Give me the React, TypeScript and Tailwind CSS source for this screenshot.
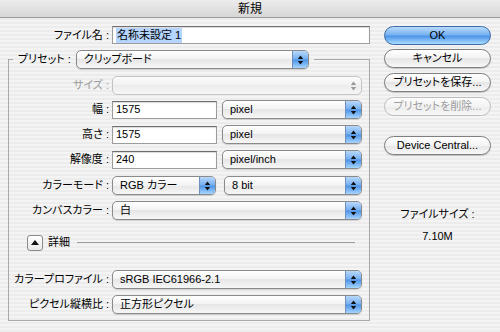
import React from "react";

const stripes =
  "bg-[repeating-linear-gradient(180deg,#ececec_0px,#ececec_2px,#f4f4f4_2px,#f4f4f4_4px)]";

function Arrows({ dim }: { dim?: boolean }): JSX.Element {
  return (
    <svg width="7" height="10" viewBox="0 0 7 10">
      <path d="M3.5 0.5 L6.2 4 L0.8 4Z M0.8 6 L6.2 6 L3.5 9.5Z" fill={dim ? "#9a9a9a" : "#111"} />
    </svg>
  );
}

function Popup({
  value,
  className,
  disabled,
}: {
  value: string;
  className: string;
  disabled?: boolean;
}): JSX.Element {
  return (
    <div
      className={
        "flex h-[19px] items-stretch overflow-hidden rounded-[5px] border " +
        (disabled
          ? "border-[#c4c4c4] bg-[linear-gradient(#fbfbfb,#f2f2f2_50%,#ececec_50%,#f6f6f6)] "
          : "border-[#8a8a8a] bg-[linear-gradient(#ffffff,#f2f2f2_50%,#e6e6e6_50%,#f7f7f7)] shadow-[0_1px_1px_rgba(0,0,0,0.15)] ") +
        className
      }
    >
      <div className="flex flex-1 items-center pl-[7px] leading-none">{value}</div>
      {disabled ? (
        <div className="flex w-[16px] items-center justify-center">
          <Arrows dim />
        </div>
      ) : (
        <div className="flex w-[16px] items-center justify-center border-l border-[#6f8fbf] bg-[linear-gradient(#b8d8fb,#74aef0_48%,#4d93e6_52%,#a6d5ff)]">
          <Arrows />
        </div>
      )}
    </div>
  );
}

function Field({ value, className }: { value: React.ReactNode; className: string }): JSX.Element {
  return (
    <div
      className={
        "flex h-[18px] items-center border border-[#9c9c9c] border-t-[#6e6e6e] bg-white pl-[3px] leading-none shadow-[inset_0_1px_1px_rgba(0,0,0,0.15)] " +
        className
      }
    >
      {value}
    </div>
  );
}

function Button({
  label,
  primary,
  disabled,
  className,
}: {
  label: string;
  primary?: boolean;
  disabled?: boolean;
  className?: string;
}): JSX.Element {
  return (
    <div
      className={
        "flex h-[19px] w-[107px] items-center justify-center rounded-full border leading-none " +
        (primary
          ? "border-[#3c6aa6] bg-[linear-gradient(#b9dbfb,#75b0f1_48%,#4a92e8_52%,#a9dcff)] "
          : disabled
            ? "border-[#bdbdbd] bg-[linear-gradient(#fdfdfd,#f3f3f3_50%,#ececec_50%,#f7f7f7)] text-[#9d9d9d] "
            : "border-[#7f7f7f] bg-[linear-gradient(#ffffff,#f3f3f3_50%,#e5e5e5_50%,#f8f8f8)] shadow-[0_1px_1px_rgba(0,0,0,0.2)] ") +
        (className ?? "")
      }
    >
      {label}
    </div>
  );
}

function Row({
  label,
  className,
  dim,
  children,
}: {
  label: string;
  className: string;
  dim?: boolean;
  children: React.ReactNode;
}): JSX.Element {
  return (
    <div className={"flex h-[19px] items-center " + className}>
      <div className={"w-[100px] whitespace-nowrap text-right leading-none " + (dim ? "text-[#9a9a9a]" : "")}>
        {label}
      </div>
      <div className="ml-[3px] flex items-center">{children}</div>
    </div>
  );
}

export default function App(): JSX.Element {
  return (
    <div className="flex h-[332px] w-[500px] flex-col overflow-hidden font-['Liberation_Sans','Noto_Sans_CJK_JP',sans-serif] text-[11px] text-black [font-feature-settings:'palt']">
      <div className="flex h-[18px] items-center justify-center border-b border-[#9a9a9a] bg-[linear-gradient(#ececec,#d6d6d6)] text-[12px] leading-none">
        新規
      </div>

      <div className={"flex flex-1 " + stripes}>
        <div className="w-[370px]">
          <div className="mt-[8px] flex h-[18px] items-center">
            <div className="w-[109px] whitespace-nowrap text-right leading-none">ファイル名 :</div>
            <Field
              className="ml-[3px] w-[258px]"
              value={<span className="bg-[#b5d5fe] px-[1px] py-[2px]">名称未設定 1</span>}
            />
          </div>

          <fieldset className="mt-[6px] ml-[8px] w-[362px] border border-[#a9a9a9] px-0 pb-[6px]">
            <legend className="ml-[4px] flex items-center px-[5px]">
              <span className="mr-[5px] whitespace-nowrap leading-none">プリセット :</span>
              <Popup value="クリップボード" className="w-[233px]" />
            </legend>

            <Row label="サイズ :" className="mt-[7px]" dim>
              <Popup value="" className="w-[250px]" disabled />
            </Row>
            <Row label="幅 :" className="mt-[5px]">
              <Field value="1575" className="w-[105px]" />
              <Popup value="pixel" className="ml-[5px] w-[140px]" />
            </Row>
            <Row label="高さ :" className="mt-[6px]">
              <Field value="1575" className="w-[105px]" />
              <Popup value="pixel" className="ml-[5px] w-[140px]" />
            </Row>
            <Row label="解像度 :" className="mt-[6px]">
              <Field value="240" className="w-[105px]" />
              <Popup value="pixel/inch" className="ml-[5px] w-[140px]" />
            </Row>
            <Row label="カラーモード :" className="mt-[7px]">
              <Popup value="RGB カラー" className="w-[104px]" />
              <Popup value="8 bit" className="ml-[8px] w-[138px]" />
            </Row>
            <Row label="カンバスカラー :" className="mt-[6px]">
              <Popup value="白" className="w-[250px]" />
            </Row>

            <div className="mt-[14px] flex h-[17px] items-center">
              <div className="ml-[18px] flex h-[16px] w-[16px] items-center justify-center rounded-[3px] border border-[#8a8a8a] bg-[linear-gradient(#ffffff,#e9e9e9)]">
                <svg width="8" height="5" viewBox="0 0 8 5">
                  <path d="M4 0 L8 5 L0 5Z" fill="#111" />
                </svg>
              </div>
              <span className="ml-[5px] leading-none">詳細</span>
              <div className="ml-[7px] mr-[14px] h-px flex-1 bg-[#9c9c9c]" />
            </div>

            <Row label="カラープロファイル :" className="mt-[19px]">
              <Popup value="sRGB IEC61966-2.1" className="w-[250px]" />
            </Row>
            <Row label="ピクセル縦横比 :" className="mt-[6px]">
              <Popup value="正方形ピクセル" className="w-[250px]" />
            </Row>
          </fieldset>
        </div>

        <div className="ml-[14px] flex w-[107px] flex-col items-center pt-[8px]">
          <Button label="OK" primary />
          <Button label="キャンセル" className="mt-[4px]" />
          <Button label="プリセットを保存..." className="mt-[5px]" />
          <Button label="プリセットを削除..." className="mt-[5px]" disabled />
          <Button label="Device Central..." className="mt-[20px]" />
          <div className="mt-[54px] leading-none">ファイルサイズ :</div>
          <div className="mt-[11px] leading-none">7.10M</div>
        </div>
      </div>
    </div>
  );
}
